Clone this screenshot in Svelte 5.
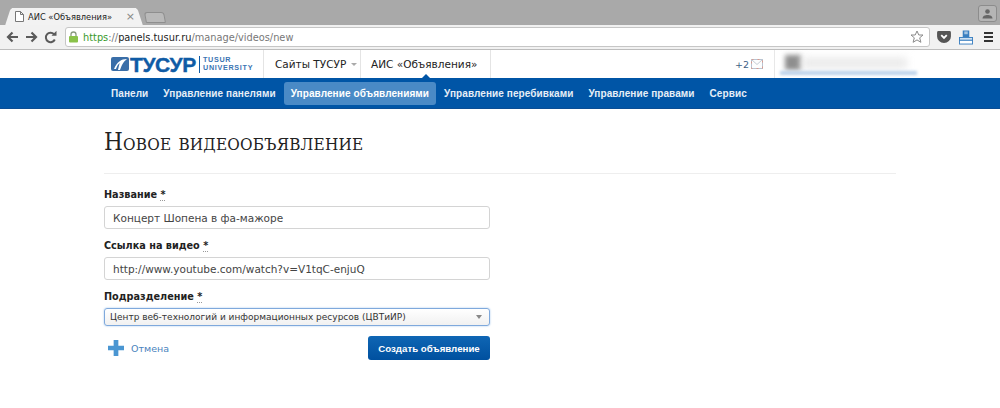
<script>
  const nav = ['Панели', 'Управление панелями', 'Управление объявлениями', 'Управление перебивками', 'Управление правами', 'Сервис'];
  const activeNav = 'Управление объявлениями';
</script>

<div class="page">
  <div class="tabstrip">
    <div class="tab">
      <svg class="fav" width="9" height="11" viewBox="0 0 9 11"><path d="M.5.5h5l3 3v7h-8z M5.500.5v3h3" fill="#fff" stroke="#777"/></svg>
      <span class="tabtitle">АИС «Объявления»</span>
      <span class="tabclose">×</span>
    </div>
    <div class="newtab"></div>
    <div class="spacer"></div>
    <div class="profile">
      <svg width="11" height="10" viewBox="0 0 11 10"><circle cx="5.500" cy="2.500" r="2.300" fill="#666"/><path d="M.5 9.500c0-2.500 2.500-3.500 5-3.500s5 1 5 3.500z" fill="#666"/></svg>
    </div>
  </div>

  <div class="toolbar">
    <svg class="navicon" width="13" height="12" viewBox="0 0 13 12"><path d="M12 6H2.500M6.500 1.500 2 6l4.500 4.500" fill="none" stroke="#5a5a5a" stroke-width="2.200"/></svg>
    <svg class="navicon" width="13" height="12" viewBox="0 0 13 12"><path d="M1 6h9.500M6.500 1.500 11 6l-4.500 4.500" fill="none" stroke="#5a5a5a" stroke-width="2.200"/></svg>
    <svg class="navicon" width="13" height="13" viewBox="0 0 13 13"><path d="M10.800 8.500A4.700 4.700 0 1 1 10 3.200" fill="none" stroke="#5a5a5a" stroke-width="2"/><path d="M7.500 4.800h5v-5z" fill="#5a5a5a"/></svg>
    <div class="omnibox">
      <svg class="lock" width="9" height="12" viewBox="0 0 9 12"><path d="M2 5.500V3.500a2.500 2.500 0 0 1 5 0v2" fill="none" stroke="#8a9a80" stroke-width="1.300"/><rect x="0" y="5" width="9" height="6.500" rx="1" fill="#8ac24a"/></svg>
      <span class="url"><span class="https">https</span><span class="scheme">://</span><span class="host">panels.tusur.ru</span><span class="scheme">/manage/videos/new</span></span>
      <svg class="star" width="14" height="14" viewBox="0 0 14 14"><path d="M7 1l1.800 4h4.200l-3.300 2.800 1.200 4.500L7 9.900l-3.900 2.400 1.200-4.500L1 5h4.200z" fill="#fff" stroke="#8a8a8a"/></svg>
    </div>
    <div class="exts">
      <svg width="14" height="12" viewBox="0 0 15 13"><path d="M1.500 0h12A1.500 1.500 0 0 1 15 1.500V6a7.500 7 0 0 1-15 0V1.500A1.500 1.500 0 0 1 1.500 0z" fill="#555"/><path d="M4.500 4.500 7.500 7.500l3-3" fill="none" stroke="#fff" stroke-width="2"/></svg>
      <svg width="14" height="15" viewBox="0 0 15 15"><rect x="4" y="0" width="7" height="7" fill="#3a7fc0"/><rect x="6" y="1" width="1" height="3" fill="#fff"/><rect x="8" y="1" width="1" height="3" fill="#fff"/><rect x=".5" y="7.500" width="14" height="3" fill="#cfe0f0" stroke="#3a7fc0"/><rect x=".5" y="10.500" width="14" height="4" fill="#fff" stroke="#3a7fc0"/></svg>
      <div class="menu"><i></i><i></i><i></i></div>
    </div>
  </div>

  <header class="sitehead">
    <div class="brand">
      <svg class="emblem" width="18" height="16" viewBox="0 0 18 16"><rect x="0" y="1" width="18" height="14" rx="2" fill="#3a6ea8"/><path d="M3 13 C6 6 10 3 16 3 C12 6 11 9 9 14 L7 14 C8 10 8 8 9 7 C7 8 6 10 5 13z" fill="#fff"/></svg>
      <span class="wordmark">ТУСУР</span>
      <span class="uni">TUSUR<br />UNIVERSITY</span>
    </div>
    <div class="headtab sites">Сайты ТУСУР <span class="caret"></span></div>
    <div class="headtab current">АИС «Объявления»</div>
    <div class="spacer"></div>
    <div class="mail">+2
      <svg width="12" height="10" viewBox="0 0 12 10"><rect x=".5" y=".5" width="11" height="9" fill="#fdfdfd" stroke="#b8c4d2"/><rect x=".5" y=".5" width="11" height="9" fill="none" stroke="#d99a8e" stroke-dasharray="2 4"/><path d="M.5.5 6 5.500 11.500.5" fill="none" stroke="#c3cbd3"/></svg>
    </div>
    <div class="userbox">
      <div class="avatar"></div>
      <div class="username"></div>
      <div class="userline"></div>
    </div>
  </header>

  <nav class="mainnav">
    {#each nav as item}
      <a class="navitem" class:active={item === activeNav}>{item}</a>
    {/each}
  </nav>

  <main class="content">
    <h1>Новое видеообъявление</h1>
    <form>
      <label class="fieldlabel" for="name">Название <abbr>*</abbr></label>
      <input id="name" class="textinput" value="Концерт Шопена в фа-мажоре" />
      <label class="fieldlabel" for="link">Ссылка на видео <abbr>*</abbr></label>
      <input id="link" class="textinput" value="http://www.youtube.com/watch?v=V1tqC-enjuQ" />
      <label class="fieldlabel" for="dep">Подразделение <abbr>*</abbr></label>
      <div class="select" id="dep">
        <span>Центр веб-технологий и информационных ресурсов (ЦВТиИР)</span>
        <i></i>
      </div>
      <div class="actions">
        <svg class="plus" width="16" height="16" viewBox="0 0 17 17"><path d="M6 0h5v6h6v5h-6v6H6v-6H0V6h6z" fill="#4a96d2"/></svg>
        <a class="cancel">Отмена</a>
        <div class="spacer"></div>
        <button type="button" class="submit">Создать объявление</button>
      </div>
    </form>
  </main>
</div>

<style>
  :global(body) { margin: 0; background: #fff; }
  .page { width: 1000px; height: 408px; overflow: hidden; font-family: "DejaVu Sans", Verdana, sans-serif; color: #222; background: #fff; }
  .spacer { flex: 1; }

  .tabstrip { height: 25px; background: #a9a9a9; display: flex; align-items: flex-end; box-sizing: border-box; padding-left: 12px; position: relative; }
  .tab { width: 124px; height: 17px; background: #f2f2f2; display: flex; align-items: center; padding: 0 0 0 3px; box-sizing: border-box; position: relative; }
  .tab::before, .tab::after { content: ""; position: absolute; top: 0; bottom: 0; width: 10px; background: #f2f2f2; z-index: 0; }
  .tab::before { left: -4px; transform: skewX(-18deg); border-radius: 3px 0 0 0; }
  .tab::after { right: -4px; transform: skewX(18deg); border-radius: 0 3px 0 0; }
  .fav, .tabtitle, .tabclose { position: relative; z-index: 1; }
  .fav { margin-right: 4px; }
  .tabtitle { font: 8.300px "DejaVu Sans", sans-serif; color: #222; flex: 1; }
  .tabclose { font: 11px "DejaVu Sans", sans-serif; color: #888; margin-right: 1px; }
  .newtab { width: 20px; height: 11px; margin: 0 0 2px 9px; background: #b9b9b9; border: 1px solid #8e8e8e; border-radius: 3px 3px 1px 1px; box-sizing: border-box; transform: skewX(10deg); }
  .profile { width: 19px; height: 17px; box-sizing: border-box; border: 1px solid #8c8c8c; border-radius: 3px; background: #b5b5b5; margin: 0 3px 3px 0; display: flex; align-items: center; justify-content: center; }

  .toolbar { height: 25px; box-sizing: border-box; background: #f1f1f1; border-bottom: 1px solid #bdbdbd; display: flex; align-items: center; padding-left: 6px; }
  .navicon { margin-right: 6px; }
  .omnibox { margin-left: 2px; width: 865px; height: 20px; box-sizing: border-box; background: #fff; border: 1px solid #c6c6c6; border-radius: 3px; display: flex; align-items: center; padding: 0 5px 0 3px; }
  .lock { margin-right: 5px; }
  .url { font: 9.800px "DejaVu Sans", sans-serif; flex: 1; }
  .https { color: #3a9a2a; }
  .scheme { color: #777; }
  .host { color: #222; }
  .exts { display: flex; align-items: center; margin-left: 7px; }
  .exts svg:first-child { margin-right: 8px; }
  .exts svg:nth-child(2) { margin-right: 11px; }
  .menu { display: flex; flex-direction: column; gap: 2px; width: 9px; }
  .menu i { display: block; height: 2px; background: #333; }

  .sitehead { height: 28px; box-sizing: border-box; padding-left: 111px; display: flex; background: #fff; }
  .brand { width: 152px; border-right: 1px solid #e4e4e4; display: flex; align-items: center; color: #0f5ba5; }
  .emblem { margin-right: 1px; }
  .wordmark { font: bold 21px/17px "Liberation Sans", sans-serif; letter-spacing: -.4px; -webkit-text-stroke: .4px #0f5ba5; color: #0f5ba5; width: 69px; border-right: 1px solid #0f5ba5; height: 17px; display: block; }
  .uni { font: bold 7.200px/8px "Liberation Sans", sans-serif; letter-spacing: .7px; color: #3b74b2; margin-left: 3px; }
  .headtab { display: flex; align-items: center; font-size: 10.500px; color: #222; box-sizing: border-box; }
  .sites { width: 97px; padding-left: 11px; gap: 5px; border-right: 1px solid #e4e4e4; }
  .caret { width: 0; height: 0; border: 3px solid transparent; border-top-color: #aaa; border-bottom: 0; }
  .current { width: 130px; padding-left: 10px; border-right: 1px solid #e4e4e4; position: relative; }
  .current::after { content: ""; position: absolute; left: 61px; bottom: 0; width: 0; height: 0; border: 4px solid transparent; border-bottom-color: #0055a6; border-top: 0; }
  .mail { font-size: 9.500px; color: #3f5f86; display: flex; align-items: center; gap: 2px; margin-right: 11px; }
  .userbox { width: 225px; border-left: 1px solid #e8e8e8; position: relative; }
  .avatar { position: absolute; left: 10px; top: 5px; width: 16px; height: 15px; background: #8e8e8e; filter: blur(2.500px); }
  .username { position: absolute; left: 27px; top: 8px; width: 105px; height: 10px; background: #e8e8e8; filter: blur(4px); }
  .userline { position: absolute; left: 5px; top: 21px; width: 137px; height: 4px; background: #bcd2ea; filter: blur(1.500px); }

  .mainnav { height: 30px; background: #0055a6; display: flex; align-items: center; padding-left: 104px; gap: 1px; border-bottom: 1px solid #0a4d94; }
  .navitem { font: bold 10px/23px "Liberation Sans", sans-serif; letter-spacing: .08px; color: #e6eef7; padding: 0 7px; border-radius: 3px; height: 23px; }
  .active { background: #4a8ac6; color: #fff; }

  .content { margin: 0 104px; }
  h1 { margin: 0; padding: 21px 0 18px; border-bottom: 1px solid #eee; font: 400 24px/25px "DejaVu Serif Condensed", "DejaVu Serif", serif; font-variant: small-caps; letter-spacing: .2px; color: #222; }
  form { width: 386px; padding-top: 14px; display: flex; flex-direction: column; }
  .fieldlabel { font: bold 9.700px/14px "DejaVu Sans", sans-serif; color: #222; display: block; margin-bottom: 4px; }
  abbr { border-bottom: 1px dotted #999; text-decoration: none; }
  .textinput { height: 23px; box-sizing: border-box; border: 1px solid #d4d4d4; border-radius: 3px; padding: 0 8px; font: 10.500px "DejaVu Sans", sans-serif; color: #444; margin-bottom: 10px; outline: none; background: #fff; }
  .select { height: 18px; box-sizing: border-box; border: 1px solid #7fa9dc; border-radius: 3px; box-shadow: 0 0 2px #9cc0ea; font-size: 9px; color: #333; padding: 0 5px; display: flex; align-items: center; justify-content: space-between; background: linear-gradient(#fff, #f1f1f1); }
  .select i { width: 0; height: 0; border: 3px solid transparent; border-top: 4px solid #888; border-bottom: 0; margin-right: 2px; }
  .actions { display: flex; align-items: center; margin-top: 10px; padding-left: 4px; }
  .plus { margin-right: 7px; }
  .cancel { font-size: 9.500px; color: #4a83bd; }
  .submit { height: 24px; width: 122px; border: 0; border-radius: 3px; background: linear-gradient(#0f66b4, #00509f); color: #fff; font: bold 9.700px "Liberation Sans", sans-serif; padding: 0; }
</style>
